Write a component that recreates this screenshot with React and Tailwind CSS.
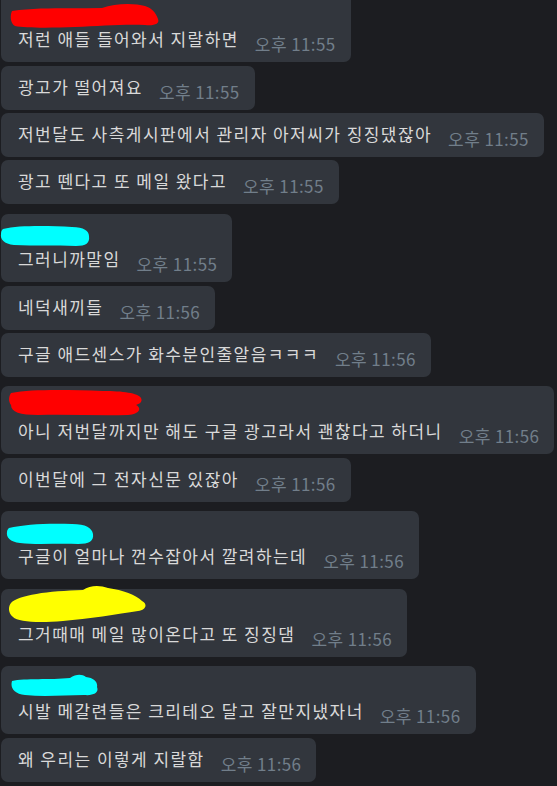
const messages = [
  { text: "저런 애들 들어와서 지랄하면", time: "오후 11:55", name: "red1", gap: "mt-0" },
  { text: "광고가 떨어져요", time: "오후 11:55", gap: "mt-[4px]" },
  { text: "저번달도 사측게시판에서 관리자 아저씨가 징징댔잖아", time: "오후 11:55", gap: "mt-[3px]" },
  { text: "광고 뗀다고 또 메일 왔다고", time: "오후 11:55", gap: "mt-[3px]" },
  { text: "그러니까말임", time: "오후 11:55", name: "cyan1", gap: "mt-[10px]" },
  { text: "네덕새끼들", time: "오후 11:56", gap: "mt-[4px]" },
  { text: "구글 애드센스가 화수분인줄알음ㅋㅋㅋ", time: "오후 11:56", gap: "mt-[3px]" },
  { text: "아니 저번달까지만 해도 구글 광고라서 괜찮다고 하더니", time: "오후 11:56", name: "red2", gap: "mt-[9px]" },
  { text: "이번달에 그 전자신문 있잖아", time: "오후 11:56", gap: "mt-[4px]" },
  { text: "구글이 얼마나 껀수잡아서 깔려하는데", time: "오후 11:56", name: "cyan2", gap: "mt-[9px]" },
  { text: "그거때매 메일 많이온다고 또 징징댐", time: "오후 11:56", name: "yellow", gap: "mt-[10px]" },
  { text: "시발 메갈련들은 크리테오 달고 잘만지냈자너", time: "오후 11:56", name: "cyan3", gap: "mt-[9px]" },
  { text: "왜 우리는 이렇게 지랄함", time: "오후 11:56", gap: "mt-[4px]" },
];

// hand-drawn marker blobs hiding the sender names
const scribbles = {
  red1: (
    <svg className="absolute left-[-8px] top-[0px]" width="150" height="25" viewBox="0 0 150 25">
      <path d="M2 8 C30 4 60 6 92 5 C105 0 125 0 135 3 C142 5 146 10 148 16 C150 21 144 23 135 22 C115 21 90 23 65 24 C40 25 15 25 5 23 C0 20 0 12 2 8 Z" fill="#ff0000" />
    </svg>
  ),
  red2: (
    <svg className="absolute left-[-10px] top-[-7px]" width="135" height="28" viewBox="0 0 135 28">
      <path d="M3 5 C25 1 60 2 95 3 C115 3 130 5 133 10 C135 14 131 16 128 17 C134 20 132 26 120 27 C90 28 60 26 30 27 C12 27 3 24 3 17 C0 13 1 8 3 5 Z" fill="#ff0000" />
    </svg>
  ),
  cyan1: (
    <svg className="absolute left-[-18px] top-[2px]" width="90" height="22" viewBox="0 0 90 22">
      <path d="M3 4 C20 0 50 1 72 2 C84 2 89 6 89 11 C90 18 86 21 76 21 C55 20 35 21 14 20 C4 19 0 14 1 9 C1 6 2 5 3 4 Z" fill="#00ffff" />
    </svg>
  ),
  cyan2: (
    <svg className="absolute left-[-12px] top-[3px]" width="88" height="22" viewBox="0 0 88 22">
      <path d="M3 5 C18 1 45 0 66 1 C80 1 86 5 87 11 C88 18 83 21 72 21 C52 20 32 22 14 20 C4 19 0 14 1 9 C1 7 2 6 3 5 Z" fill="#00ffff" />
    </svg>
  ),
  cyan3: (
    <svg className="absolute left-[-8px] top-[-1px]" width="88" height="23" viewBox="0 0 88 23">
      <path d="M2 7 C15 4 40 6 60 4 C66 0 72 0 76 3 C84 4 88 8 87 13 C89 18 85 22 74 21 C55 21 35 23 15 21 C4 20 0 14 2 7 Z" fill="#00ffff" />
    </svg>
  ),
  yellow: (
    <svg className="absolute left-[-10px] top-[-13px]" width="139" height="38" viewBox="0 0 139 38">
      <path d="M3 18 C10 10 40 6 75 5 C82 0 92 0 100 3 C115 5 128 10 134 16 C140 19 138 25 130 26 C110 29 80 34 55 36 C30 38 10 37 5 32 C0 28 0 22 3 18 Z" fill="#ffff00" />
    </svg>
  ),
};

const Bubble = ({ text, time, name, gap }) => {
  return (
    <div className={`${gap} w-fit rounded-[7px] bg-[#32363d] pl-[17px] pr-[15px] pt-[9px] pb-[11px]`}>
      {name && <div className="relative h-[24px]">{scribbles[name]}</div>}
      <div className="flex items-end gap-[16px] whitespace-nowrap">
        <span className="text-[17px] leading-[24px] tracking-[1.45px] text-[#d9d9d9]">{text}</span>
        <span className="translate-y-[5px] text-[17px] leading-[24px] tracking-[0.4px] text-[#717e8a]">{time}</span>
      </div>
    </div>
  );
};

export default function App() {
  return (
    <div
      className="h-[786px] w-[557px] overflow-hidden bg-[#1c1d21]"
      style={{ fontFamily: '"Noto Sans CJK KR", "Noto Sans", sans-serif' }}
    >
      <div className="-mt-[6px] flex flex-col pl-[1px]">
        {messages.map((m, i) => (
          <Bubble key={i} {...m} />
        ))}
      </div>
    </div>
  );
}
